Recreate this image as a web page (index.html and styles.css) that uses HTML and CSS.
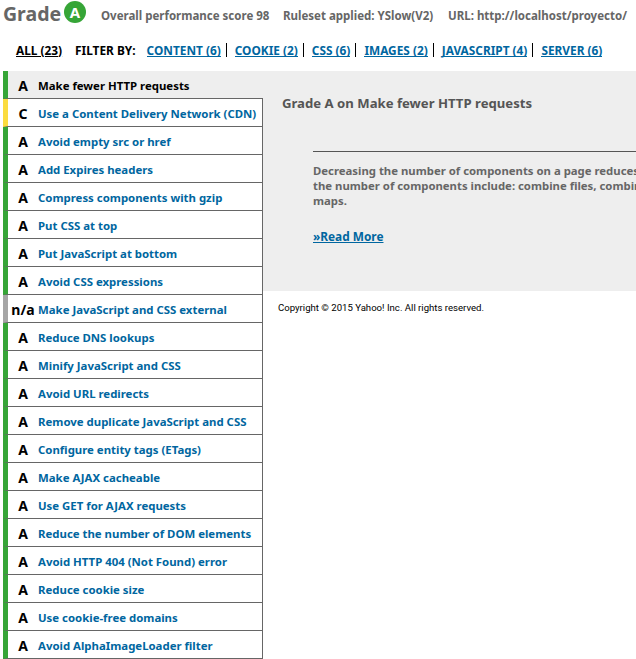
FILE: index.html
```html
<!DOCTYPE html>
<html lang="en">
<head>
<meta charset="utf-8">
<title>YSlow Grade</title>
<link rel="stylesheet" href="styles.css">
</head>
<body>
<header class="summary">
  <div class="grade-title">Grade</div>
  <div class="grade-badge">A</div>
  <div class="stat stat-score">Overall performance score 98</div>
  <div class="stat stat-rules">Ruleset applied: YSlow(V2)</div>
  <div class="stat">URL: http://localhost/proyecto/</div>
</header>
<nav class="filters">
  <a class="all" href="#">ALL (23)</a>
  <span class="filter-label">FILTER BY:</span>
  <a class="cat" href="#">CONTENT (6)</a>
  <a class="cat" href="#">COOKIE (2)</a>
  <a class="cat" href="#">CSS (6)</a>
  <a class="cat" href="#">IMAGES (2)</a>
  <a class="cat" href="#">JAVASCRIPT (4)</a>
  <a class="cat last" href="#">SERVER (6)</a>
</nav>
<main class="results">
  <ul class="rules">
    <li class="rule selected"><span class="g">A</span><a href="#">Make fewer HTTP requests</a></li>
    <li class="rule c"><span class="g">C</span><a href="#">Use a Content Delivery Network (CDN)</a></li>
    <li class="rule"><span class="g">A</span><a href="#">Avoid empty src or href</a></li>
    <li class="rule"><span class="g">A</span><a href="#">Add Expires headers</a></li>
    <li class="rule"><span class="g">A</span><a href="#">Compress components with gzip</a></li>
    <li class="rule"><span class="g">A</span><a href="#">Put CSS at top</a></li>
    <li class="rule"><span class="g">A</span><a href="#">Put JavaScript at bottom</a></li>
    <li class="rule"><span class="g">A</span><a href="#">Avoid CSS expressions</a></li>
    <li class="rule na"><span class="g">n/a</span><a href="#">Make JavaScript and CSS external</a></li>
    <li class="rule"><span class="g">A</span><a href="#">Reduce DNS lookups</a></li>
    <li class="rule"><span class="g">A</span><a href="#">Minify JavaScript and CSS</a></li>
    <li class="rule"><span class="g">A</span><a href="#">Avoid URL redirects</a></li>
    <li class="rule"><span class="g">A</span><a href="#">Remove duplicate JavaScript and CSS</a></li>
    <li class="rule"><span class="g">A</span><a href="#">Configure entity tags (ETags)</a></li>
    <li class="rule"><span class="g">A</span><a href="#">Make AJAX cacheable</a></li>
    <li class="rule"><span class="g">A</span><a href="#">Use GET for AJAX requests</a></li>
    <li class="rule"><span class="g">A</span><a href="#">Reduce the number of DOM elements</a></li>
    <li class="rule"><span class="g">A</span><a href="#">Avoid HTTP 404 (Not Found) error</a></li>
    <li class="rule"><span class="g">A</span><a href="#">Reduce cookie size</a></li>
    <li class="rule"><span class="g">A</span><a href="#">Use cookie-free domains</a></li>
    <li class="rule"><span class="g">A</span><a href="#">Avoid AlphaImageLoader filter</a></li>
  </ul>
  <section class="detail-col">
    <div class="detail">
      <h2>Grade A on Make fewer HTTP requests</h2>
      <div class="body">
        <p>Decreasing the number of components on a page reduces<br>the number of components include: combine files, combin<br>maps.</p>
        <a class="more" href="#">»Read More</a>
      </div>
    </div>
    <footer class="copy">Copyright © 2015 Yahoo! Inc. All rights reserved.</footer>
  </section>
</main>
</body>
</html>
```
FILE: styles.css
```css
* { box-sizing: border-box; }
html, body { margin: 0; padding: 0; overflow: hidden; background: #fff; }
body { width: 636px; height: 659px; font-family: "Noto Sans", "DejaVu Sans", sans-serif; font-size: 12px; font-weight: 700; }
a { color: #0066a0; }

.summary { display: flex; align-items: flex-start; height: 33px; padding-left: 3px; color: #666; }
.grade-title { font-size: 19.5px; line-height: 27px; width: 61px; }
.grade-badge { width: 22px; height: 22px; margin-top: 1px; border-radius: 50%; background: #36a537; color: #fff; font-size: 15px; line-height: 22px; text-align: center; }
.stat { font-size: 11.5px; line-height: 15px; margin-top: 8px; white-space: nowrap; }
.stat-score { margin-left: 15px; width: 182px; }
.stat-rules { width: 165px; }

.filters { display: flex; align-items: center; height: 38px; padding: 0 0 5px 16px; font-size: 11.85px; white-space: nowrap; }
.all { color: #000; margin-right: 13px; }
.filter-label { color: #000; margin-right: 11px; }
.cat { display: inline-block; line-height: 14px; text-decoration: none; background: linear-gradient(#0066a0, #0066a0) no-repeat 0 100% / calc(100% - 14px) 1px; }
.cat::after { content: ""; display: inline-block; width: 1px; height: 14px; background: #000; margin: 0 8px 0 5px; vertical-align: -2px; }
.last { background-size: 100% 1px; }
.last::after { display: none; }

.results { display: flex; align-items: flex-start; }
.rules { list-style: none; margin: 0 0 0 3px; padding: 0; width: 260px; flex: none; }
.rule { display: flex; align-items: center; height: 28px; padding-top: 1px; border-left: 5px solid #36a537; border-right: 1px solid #666; border-bottom: 1px solid #666; white-space: nowrap; }
.rule a { text-decoration: none; font-size: 11.4px; }
.g { width: 30px; text-align: center; font-size: 14px; color: #000; flex: none; }
.selected { background: #eee; border-right: 0; }
.selected a { color: #000; }
.c { border-left-color: #fbdc3f; }
.na { border-left-color: #a6a6a6; }

.detail-col { flex: 1; min-width: 0; }
.detail { height: 220px; background: #eee; padding: 23px 0 0 19px; overflow: hidden; }
.detail h2 { margin: 0; font-size: 13.15px; line-height: 18px; color: #555; }
.body { margin-left: 31px; margin-top: 39px; border-top: 1px solid #555; padding-top: 11px; white-space: nowrap; }
.body p { margin: 0 0 20px; font-size: 11.35px; line-height: 15px; color: #666; }
.more { font-size: 11.85px; }
.copy { margin: 10px 0 0 15px; font-family: Roboto, "Noto Sans", sans-serif; font-size: 9.6px; font-weight: 400; line-height: 14px; color: #000; }
```
